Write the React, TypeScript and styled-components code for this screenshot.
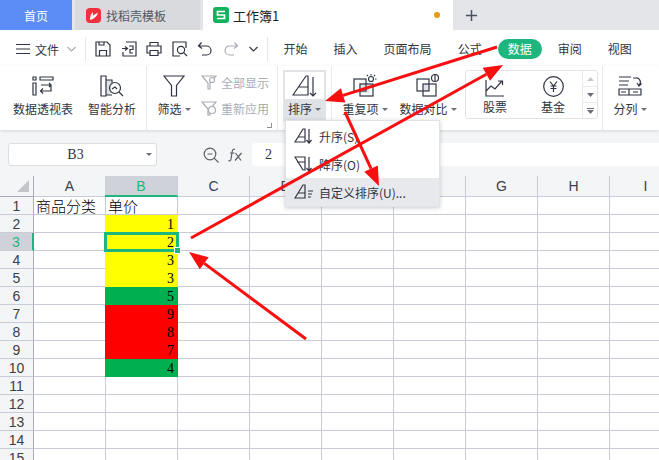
import * as React from 'react';
import styled, { createGlobalStyle } from 'styled-components';

const GlobalStyle = createGlobalStyle`
    html, body {
        margin: 0;
        padding: 0;
        background: #fff;
    }
    * {
        box-sizing: border-box;
    }
`;

const INK = '#2f3542';
const GRAY = '#a9adb5';
const LINE = '#c9cbd6';
const COLUMNS = ['A', 'B', 'C', 'D', 'E', 'F', 'G', 'H', 'I'];

const Page = styled.div`
    position: relative;
    width: 659px;
    height: 460px;
    overflow: hidden;
    background: #fff;
    color: ${INK};
    font-family: 'Noto Sans CJK SC', 'Liberation Sans', sans-serif;
    font-size: 12px;
`;

const TabBar = styled.div`
    display: flex;
    height: 30px;
    background: #e3e5e9;
`;

const HomeTab = styled.div`
    width: 72px;
    margin-right: 3px;
    background: #5c8df6;
    color: #fff;
    display: flex;
    align-items: center;
    justify-content: center;
`;

const Tab = styled.div<{ $active?: boolean }>`
    display: flex;
    align-items: center;
    gap: ${({ $active }) => ($active ? '4px' : '5px')};
    font-size: ${({ $active }) => ($active ? '13px' : '12px')};
    width: ${({ $active }) => ($active ? '250px' : '125px')};
    margin-right: ${({ $active }) => ($active ? '0' : '3px')};
    padding-left: ${({ $active }) => ($active ? '10px' : '11px')};
    background: ${({ $active }) => ($active ? '#fff' : '#d8dade')};
    color: ${({ $active }) => ($active ? '#1f2329' : '#53585f')};
`;

const UnsavedDot = styled.span`
    width: 6px;
    height: 6px;
    border-radius: 50%;
    background: #e89a10;
    margin-left: auto;
    margin-right: 13px;
`;

const AddTab = styled.div`
    width: 36px;
    display: flex;
    align-items: center;
    justify-content: center;
`;

const MenuRow = styled.div`
    display: flex;
    align-items: center;
    height: 36px;
    padding-left: 16px;
    padding-top: 2px;
    background: #fff;
`;

const FileLabel = styled.span`
    margin-left: 5px;
    margin-right: 8px;
`;

const MenuDivider = styled.span`
    width: 1px;
    height: 24px;
    background: #e4e6ea;
`;

const QuickIcons = styled.div`
    display: flex;
    align-items: center;
    gap: 9.6px;
    margin: 0 9px;
`;

const MenuTabs = styled.div`
    display: flex;
    align-items: center;
    gap: 6px;
    margin-left: 6px;
`;

const MenuItem = styled.span<{ $active?: boolean }>`
    flex: none;
    height: 20px;
    line-height: 20px;
    padding: 0 10px;
    white-space: nowrap;
    border-radius: 10px;
    background: ${({ $active }) => ($active ? '#1fb57f' : 'transparent')};
    color: ${({ $active }) => ($active ? '#fff' : INK)};
`;

const Ribbon = styled.div`
    display: flex;
    height: 64px;
    background: #fff;
    box-shadow: 0 1px 3px rgba(60, 70, 90, 0.18);
    position: relative;
`;

const RibbonGroup = styled.div<{ $width: number; $divider?: boolean }>`
    position: relative;
    display: flex;
    flex: none;
    width: ${({ $width }) => $width}px;
    border-right: ${({ $divider }) => ($divider ? '1px solid #e8eaed' : 'none')};
`;

const RibbonButton = styled.div<{ $width: number }>`
    width: ${({ $width }) => $width}px;
    flex: none;
    display: flex;
    flex-direction: column;
    align-items: center;
    padding-top: 8px;
    white-space: nowrap;
`;

const RibbonIcon = styled.div`
    height: 24px;
    margin-bottom: 3px;
    display: flex;
    align-items: center;
`;

const RibbonLabel = styled.div`
    display: flex;
    align-items: center;
    gap: 3px;
    height: 16px;
    line-height: 16px;
`;

const Caret = styled.span`
    width: 0;
    height: 0;
    border-left: 3px solid transparent;
    border-right: 3px solid transparent;
    border-top: 3px solid #6b7078;
`;

const SortButton = styled.div`
    width: 43px;
    height: 52px;
    margin: 4px 0 0 5px;
    border: 2px solid #e1e3e7;
    border-bottom: none;
    background: linear-gradient(#fff 0 27px, #dfe2e6 27px);
    display: flex;
    flex-direction: column;
    align-items: center;
    padding-top: 3px;
`;

const SortGlyph = styled.svg.attrs({ fill: 'none' })`
    display: block;
    flex: none;
    stroke-width: 1.2;
    margin-bottom: 4px;
`;

const SmallActions = styled.div`
    display: flex;
    flex-direction: column;
    gap: 8px;
    padding-top: 7px;
    color: ${GRAY};
`;

const SmallAction = styled.div`
    display: flex;
    align-items: center;
    gap: 4px;
    height: 18px;
    white-space: nowrap;
`;

const GroupCorner = styled.span`
    position: absolute;
    right: 5px;
    bottom: 2px;
    width: 5px;
    height: 5px;
    border-right: 1px solid #8f949c;
    border-bottom: 1px solid #8f949c;
`;

const StockBox = styled.div`
    display: flex;
    width: 133px;
    height: 49px;
    margin: 4px 0 0 0;
    border: 1px solid #e1e3e7;
    border-radius: 3px;
`;

const StockButton = styled.div`
    width: 58px;
    display: flex;
    flex-direction: column;
    align-items: center;
    padding-top: 5px;
    gap: 1px;
`;

const StockSpinner = styled.div`
    margin-left: auto;
    width: 15px;
    border-left: 1px solid #e8eaed;
    display: flex;
    flex-direction: column;
`;

const SpinCell = styled.div`
    flex: 1;
    display: flex;
    align-items: center;
    justify-content: center;
    & + & {
        border-top: 1px solid #e8eaed;
    }
`;

const FormulaBar = styled.div`
    height: 46px;
    background: #f4f5f7;
    display: flex;
    align-items: center;
    padding: 3px 0 0 8px;
`;

const NameBox = styled.div`
    position: relative;
    width: 149px;
    height: 23px;
    background: #fff;
    border: 1px solid #dcdee2;
    border-radius: 3px;
    font-family: 'Liberation Serif', serif;
    font-size: 14px;
    line-height: 22px;
    text-align: center;
    padding-right: 14px;
`;

const NameCaret = styled(Caret)`
    position: absolute;
    right: 4px;
    top: 9px;
`;

const FormulaTools = styled.div`
    display: flex;
    align-items: center;
    gap: 9px;
    margin: 0 9px 0 46px;
`;

const FormulaInput = styled.div`
    flex: 1;
    height: 23px;
    background: #fff;
    border-radius: 3px 0 0 3px;
    font-family: 'Liberation Serif', serif;
    font-size: 14px;
    line-height: 23px;
    padding-left: 13px;
`;

const Sheet = styled.div`
    display: grid;
    grid-template-columns: 34px repeat(9, 72px);
    grid-template-rows: 21px;
    grid-auto-rows: 18px;
`;

const Corner = styled.div`
    background: #f4f5f7;
    border-right: 1px solid #a8acb8;
    border-bottom: 1px solid #a8acb8;
    position: relative;
`;

const CornerMark = styled.span`
    position: absolute;
    right: 4px;
    bottom: 4px;
    width: 0;
    height: 0;
    border-left: 12px solid transparent;
    border-bottom: 12px solid #c3c5ca;
`;

const ColumnHead = styled.div<{ $selected?: boolean }>`
    text-align: center;
    font-size: 14px;
    line-height: 20px;
    font-family: 'Liberation Sans', sans-serif;
    background: ${({ $selected }) => ($selected ? '#cfd2d9' : '#f4f5f7')};
    color: ${({ $selected }) => ($selected ? '#1fb57f' : '#3a3f49')};
    border-right: 1px solid ${LINE};
    border-bottom: ${({ $selected }) => ($selected ? '2px solid #1fb57f' : `1px solid ${LINE}`)};
    margin-left: ${({ $selected }) => ($selected ? '-1px' : '0')};
`;

const RowHead = styled.div<{ $selected?: boolean }>`
    text-align: center;
    font-size: 14px;
    line-height: 18px;
    font-family: 'Liberation Sans', sans-serif;
    background: ${({ $selected }) => ($selected ? '#cfd2d9' : '#f4f5f7')};
    color: ${({ $selected }) => ($selected ? '#1fb57f' : '#3a3f49')};
    border-bottom: 1px solid ${LINE};
    border-right: ${({ $selected }) => ($selected ? '2px solid #1fb57f' : '1px solid #a8acb8')};
`;

const Cell = styled.div<{ $fill?: string; $number?: boolean; $selected?: boolean }>`
    position: relative;
    background: ${({ $fill }) => $fill || '#fff'};
    border-right: 1px solid ${({ $fill }) => $fill || LINE};
    border-bottom: 1px solid ${({ $fill }) => $fill || LINE};
    margin-left: ${({ $fill }) => ($fill ? '-1px' : '0')};
    color: #000;
    font-family: ${({ $number }) => ($number ? "'Liberation Serif', serif" : "'Noto Sans CJK SC', sans-serif")};
    font-size: ${({ $number }) => ($number ? '14px' : '15px')};
    line-height: ${({ $number }) => ($number ? '20px' : '18px')};
    padding: ${({ $number }) => ($number ? '0 3px 0 2px' : '0 2px')};
    text-align: ${({ $number }) => ($number ? 'right' : 'left')};
    white-space: nowrap;
    font-weight: ${({ $number }) => ($number ? 400 : 300)};
    outline: ${({ $selected }) => ($selected ? '3px solid #1fb57f' : 'none')};
    outline-offset: -2px;
    z-index: ${({ $selected }) => ($selected ? 2 : 0)};
`;

const FillHandle = styled.span`
    position: absolute;
    right: -4px;
    bottom: -4px;
    width: 5px;
    height: 5px;
    background: #1fb57f;
    border: 1px solid #fff;
    box-sizing: content-box;
`;

const SortMenu = styled.div`
    position: absolute;
    left: 285px;
    top: 120px;
    width: 155px;
    height: 87px;
    padding: 1px 0 0 0;
    background: #fff;
    border: 1px solid #e1e3e7;
    box-shadow: 0 1px 4px rgba(40, 50, 70, 0.25);
    z-index: 5;
`;

const SortOption = styled.div<{ $hover?: boolean }>`
    display: flex;
    align-items: center;
    gap: 5px;
    height: 28px;
    padding-left: 8px;
    background: ${({ $hover }) => ($hover ? '#e7e9ed' : 'transparent')};
`;

const ArrowLayer = styled.svg`
    position: absolute;
    left: 0;
    top: 0;
    z-index: 10;
    pointer-events: none;
`;

const Stroke = styled.svg.attrs({ fill: 'none' })`
    display: block;
    flex: none;
    stroke-width: 1.2;
`;

const FileChevron = styled(Stroke)`
    margin-right: 9px;
`;

const StockChart = styled(Stroke)`
    margin-top: 3px;
`;

const AscIcon = () => (
    <Stroke width="20" height="18" viewBox="0 0 20 18" stroke={INK}>
        <path d="M1 15 L9 2 H11 V15 Z M4 10 H11" />
        <path d="M15 2 V16 M12.5 13 L15 16 L17.5 13" />
    </Stroke>
);

const SortRows: { fill?: string; value?: string }[] = [
    { value: undefined },
    { fill: '#ffff00', value: '1' },
    { fill: '#ffff00', value: '2' },
    { fill: '#ffff00', value: '3' },
    { fill: '#ffff00', value: '3' },
    { fill: '#00b050', value: '5' },
    { fill: '#ff0000', value: '9' },
    { fill: '#ff0000', value: '8' },
    { fill: '#ff0000', value: '7' },
    { fill: '#00b050', value: '4' },
    {},
    {},
    {},
    {},
    {},
];

const RedArrow = ({ x1, y1, x2, y2 }: { x1: number; y1: number; x2: number; y2: number }) => {
    const angle = Math.atan2(y2 - y1, x2 - x1);
    const len = 19;
    const wing = 7.5;
    const bx = x2 - Math.cos(angle) * len;
    const by = y2 - Math.sin(angle) * len;
    const px = -Math.sin(angle) * wing;
    const py = Math.cos(angle) * wing;
    return (
        <g>
            <line x1={x1} y1={y1} x2={bx} y2={by} stroke="#f90f0f" strokeWidth="3" />
            <polygon points={`${x2},${y2} ${bx + px},${by + py} ${bx - px},${by - py}`} fill="#f90f0f" />
        </g>
    );
};

const App = () => {
    return (
        <Page>
            <GlobalStyle />
            <TabBar>
                <HomeTab>首页</HomeTab>
                <Tab>
                    <svg width="15" height="15" viewBox="0 0 15 15">
                        <rect width="15" height="15" rx="4" fill="#f0303c" />
                        <path d="M4 12 C4 8 5 6 7 4 C7 6 7 7 6.8 8 C8 6.5 10 5.5 12 5 C11 8 8 11 4 12 Z" fill="#fff" />
                    </svg>
                    找稻壳模板
                </Tab>
                <Tab $active>
                    <svg width="16" height="16" viewBox="0 0 16 16">
                        <rect width="16" height="16" rx="3" fill="#12b35d" />
                        <path d="M12 4.5 H4.5 V8 H11.5 V11.5 H4" fill="none" stroke="#fff" strokeWidth="1.7" />
                    </svg>
                    工作簿1
                    <UnsavedDot />
                </Tab>
                <AddTab>
                    <svg width="13" height="13" viewBox="0 0 14 14" stroke="#4a5160" strokeWidth="1.6">
                        <path d="M7 1 V13 M1 7 H13" />
                    </svg>
                </AddTab>
            </TabBar>

            <MenuRow>
                <Stroke width="14" height="12" viewBox="0 0 14 12" stroke={INK}>
                    <path d="M0 1.5 H14 M0 6 H14 M0 10.5 H14" />
                </Stroke>
                <FileLabel>文件</FileLabel>
                <FileChevron width="9" height="6" viewBox="0 0 9 6" stroke={GRAY}>
                    <path d="M0.5 1 L4.5 5 L8.5 1" />
                </FileChevron>
                <MenuDivider />
                <QuickIcons>
                    <Stroke width="16" height="16" viewBox="0 0 16 16" stroke={INK}>
                        <path d="M1 1 H12 L15 4 V15 H1 Z M4.5 15 V9.5 H11.5 V15 M4 1 V4 H9 V1" />
                    </Stroke>
                    <Stroke width="16" height="16" viewBox="0 0 16 16" stroke={INK}>
                        <path d="M5 1 H15 V15 H2 V11 M1 7.5 H6 M4 5.5 L6.5 7.5 L4 9.5 M8 5 H12 V8.5 H9 V12 H12" />
                    </Stroke>
                    <Stroke width="16" height="16" viewBox="0 0 16 16" stroke={INK}>
                        <path d="M4 5 V1.5 H12 V5 M4 12 H1 V5 H15 V12 H12 M4 9.5 H12 V14.5 H4 Z" />
                    </Stroke>
                    <Stroke width="16" height="16" viewBox="0 0 16 16" stroke={INK}>
                        <path d="M14 7 V1 H1 V15 H8" />
                        <circle cx="9" cy="9" r="3.6" />
                        <path d="M11.6 11.6 L15 15" />
                    </Stroke>
                    <Stroke width="16" height="16" viewBox="0 0 16 16" stroke={INK}>
                        <path d="M4.5 1.5 L1.5 5 L5 7.5 M2 5 H9.5 A4.5 4.5 0 0 1 9.5 14 H5" />
                    </Stroke>
                    <Stroke width="16" height="16" viewBox="0 0 16 16" stroke={GRAY}>
                        <path d="M11.5 1.5 L14.5 5 L11 7.5 M14 5 H6.5 A4.5 4.5 0 0 0 6.5 14 H11" />
                    </Stroke>
                    <Stroke width="9" height="6" viewBox="0 0 9 6" stroke={INK}>
                        <path d="M0.5 1 L4.5 5 L8.5 1" />
                    </Stroke>
                </QuickIcons>
                <MenuDivider />
                <MenuTabs>
                    <MenuItem>开始</MenuItem>
                    <MenuItem>插入</MenuItem>
                    <MenuItem>页面布局</MenuItem>
                    <MenuItem>公式</MenuItem>
                    <MenuItem $active>数据</MenuItem>
                    <MenuItem>审阅</MenuItem>
                    <MenuItem>视图</MenuItem>
                </MenuTabs>
            </MenuRow>

            <Ribbon>
                <RibbonGroup $width={147} $divider>
                    <RibbonButton $width={86}>
                        <RibbonIcon>
                            <Stroke width="22" height="20" viewBox="0 0 22 20" stroke={INK}>
                                <path d="M1 1 H4 V4 H1 Z M1 7 H4 V19 H1 Z M8 1 H21 V4 H8 Z M9 9 H19 V15 H9 M11 12.5 L8.5 15 L11 17.5 M17 7 L19 9 L17 11" />
                            </Stroke>
                        </RibbonIcon>
                        <RibbonLabel>数据透视表</RibbonLabel>
                    </RibbonButton>
                    <RibbonButton $width={52}>
                        <RibbonIcon>
                            <Stroke width="24" height="23" viewBox="0 0 24 23" stroke={INK}>
                                <path d="M6 5 H11 V20 H6 Z" fill="#dfe2e6" stroke="none" />
                                <path d="M1 1 H6 V21 H1 Z M6 5 H12 V8 M6 20 H12" />
                                <circle cx="15" cy="13" r="5.5" />
                                <path d="M19 17 L23 21 M12 14 L15 12 L17 14" />
                            </Stroke>
                        </RibbonIcon>
                        <RibbonLabel>智能分析</RibbonLabel>
                    </RibbonButton>
                </RibbonGroup>
                <RibbonGroup $width={131} $divider>
                    <RibbonButton $width={54}>
                        <RibbonIcon>
                            <Stroke width="22" height="22" viewBox="0 0 22 22" stroke={INK}>
                                <path d="M1 1 H21 L13.5 10.5 V21 H8.5 V10.5 Z" />
                            </Stroke>
                        </RibbonIcon>
                        <RibbonLabel>
                            筛选<Caret />
                        </RibbonLabel>
                    </RibbonButton>
                    <SmallActions>
                        <SmallAction>
                            <Stroke width="16" height="15" viewBox="0 0 16 15" stroke={GRAY}>
                                <path d="M1 1 H15 L9 8 V14 H7 V8 Z" />
                                <circle cx="11" cy="5" r="2.5" fill="#fff" />
                            </Stroke>
                            全部显示
                        </SmallAction>
                        <SmallAction>
                            <Stroke width="16" height="15" viewBox="0 0 16 15" stroke={GRAY}>
                                <path d="M1 1 H15 L9 8 V14 H7 V8 Z" />
                                <circle cx="11" cy="9" r="3.5" fill="#fff" />
                            </Stroke>
                            重新应用
                        </SmallAction>
                    </SmallActions>
                    <GroupCorner />
                </RibbonGroup>
                <RibbonGroup $width={54} $divider>
                    <SortButton>
                        <SortGlyph width="25" height="22" viewBox="0 0 25 22" stroke={INK}>
                            <path d="M1 20 L14 1 H16 V20 Z M7 12 H16" />
                            <path d="M21 2 V21 M18 18 L21 21 L24 18" />
                        </SortGlyph>
                        <RibbonLabel>
                            排序<Caret />
                        </RibbonLabel>
                    </SortButton>
                </RibbonGroup>
                <RibbonGroup $width={133}>
                    <RibbonButton $width={66}>
                        <RibbonIcon>
                            <Stroke width="24" height="24" viewBox="0 0 24 24" stroke={INK}>
                                <rect x="6" y="9" width="10" height="10" fill="#dfe2e6" stroke="none" />
                                <rect x="1" y="5" width="12" height="12" />
                                <rect x="7" y="10" width="13" height="12" />
                                <circle cx="18" cy="5" r="2.5" />
                                <path d="M18 0 V1.5 M23.5 5 H22 M14 1 L15 2 M22 1 L21 2" />
                            </Stroke>
                        </RibbonIcon>
                        <RibbonLabel>
                            重复项<Caret />
                        </RibbonLabel>
                    </RibbonButton>
                    <RibbonButton $width={60}>
                        <RibbonIcon>
                            <Stroke width="24" height="24" viewBox="0 0 24 24" stroke={INK}>
                                <rect x="7" y="10" width="6" height="7" fill="#dfe2e6" stroke="none" />
                                <rect x="1" y="5" width="12" height="12" />
                                <rect x="7" y="10" width="13" height="12" />
                                <circle cx="19" cy="4" r="3.5" />
                                <path d="M19 0.5 V7.5" />
                            </Stroke>
                        </RibbonIcon>
                        <RibbonLabel>
                            数据对比<Caret />
                        </RibbonLabel>
                    </RibbonButton>
                </RibbonGroup>
                <RibbonGroup $width={138} $divider>
                    <StockBox>
                        <StockButton>
                            <StockChart width="20" height="18" viewBox="0 0 20 18" stroke={INK}>
                                <path d="M1 1 V17 H19 M1 12 L6 7 L10 10 L17 2 M13 2 H17.5 V6" />
                            </StockChart>
                            股票
                        </StockButton>
                        <StockButton>
                            <Stroke width="21" height="21" viewBox="0 0 21 21" stroke={INK}>
                                <circle cx="10.5" cy="10.5" r="9.8" />
                                <path d="M7 5.5 L10.5 10 L14 5.5 M10.5 10 V16 M7.5 10 H13.5 M7.5 12.5 H13.5" />
                            </Stroke>
                            基金
                        </StockButton>
                        <StockSpinner>
                            <SpinCell>
                                <svg width="7" height="4" viewBox="0 0 7 4">
                                    <path d="M0 4 L3.5 0 L7 4 Z" fill="#c5c8ce" />
                                </svg>
                            </SpinCell>
                            <SpinCell>
                                <svg width="7" height="4" viewBox="0 0 7 4">
                                    <path d="M0 0 L3.5 4 L7 0 Z" fill="#6b7078" />
                                </svg>
                            </SpinCell>
                            <SpinCell>
                                <svg width="7" height="6" viewBox="0 0 7 6">
                                    <path d="M0 0 H7 V1 H0 Z M0 2 L3.5 6 L7 2 Z" fill="#6b7078" />
                                </svg>
                            </SpinCell>
                        </StockSpinner>
                    </StockBox>
                </RibbonGroup>
                <RibbonButton $width={54}>
                    <RibbonIcon>
                        <Stroke width="24" height="20" viewBox="0 0 24 20" stroke={INK}>
                            <path d="M1 1 H13 M1 5 H11 M1 9 H10 M1 13 H23 V19 H1 Z M11 13 V19 M3 16 H8 M15 16 H20 M15 2 H18 A4 4 0 0 1 21 9 M19 7 L21 10 L23.5 7.5" />
                        </Stroke>
                    </RibbonIcon>
                    <RibbonLabel>
                        分列<Caret />
                    </RibbonLabel>
                </RibbonButton>
            </Ribbon>

            <FormulaBar>
                <NameBox>
                    B3
                    <NameCaret />
                </NameBox>
                <FormulaTools>
                    <Stroke width="16" height="16" viewBox="0 0 16 16" stroke="#5a5f69">
                        <circle cx="7" cy="7" r="5.8" />
                        <path d="M4.5 7 H9.5 M11.2 11.2 L15.5 15.5" />
                    </Stroke>
                    <Stroke width="15" height="14" viewBox="0 0 15 14" stroke="#5a5f69">
                        <path d="M7 1.5 C5.5 0.5 4.5 1.5 4.2 3.5 L3 11 C2.7 13 1.6 13.4 0.5 12.6 M2 5 H6.5 M7.5 5 L13 12.5 M13.5 5 L7 12.5" />
                    </Stroke>
                </FormulaTools>
                <FormulaInput>2</FormulaInput>
            </FormulaBar>

            <Sheet>
                <Corner>
                    <CornerMark />
                </Corner>
                {COLUMNS.map((col) => (
                    <ColumnHead key={col} $selected={col === 'B'}>
                        {col}
                    </ColumnHead>
                ))}
                {SortRows.map((row, i) => (
                    <React.Fragment key={i}>
                        <RowHead $selected={i === 2}>{i + 1}</RowHead>
                        {COLUMNS.map((col) => {
                            if (col === 'A') {
                                return <Cell key={col}>{i === 0 ? '商品分类' : ''}</Cell>;
                            }
                            if (col === 'B') {
                                if (i === 0) {
                                    return <Cell key={col}>单价</Cell>;
                                }
                                return (
                                    <Cell key={col} $fill={row.fill} $number $selected={i === 2}>
                                        {row.value}
                                        {i === 2 && <FillHandle />}
                                    </Cell>
                                );
                            }
                            return <Cell key={col} />;
                        })}
                    </React.Fragment>
                ))}
            </Sheet>

            <SortMenu>
                <SortOption>
                    <AscIcon />
                    升序(S)
                </SortOption>
                <SortOption>
                    <Stroke width="20" height="18" viewBox="0 0 20 18" stroke={INK}>
                        <path d="M1 2 H11 V15 H9 Z M3 7 H11" />
                        <path d="M15 2 V16 M12.5 13 L15 16 L17.5 13" />
                    </Stroke>
                    降序(O)
                </SortOption>
                <SortOption $hover>
                    <Stroke width="20" height="18" viewBox="0 0 20 18" stroke={INK}>
                        <path d="M1 15 L9 2 H11 V15 Z M4 10 H11 M14 8 H19 M14 11 H18 M14 14 H17" />
                    </Stroke>
                    自定义排序(U)...
                </SortOption>
            </SortMenu>

            <ArrowLayer width="659" height="460" viewBox="0 0 659 460">
                <RedArrow x1={497} y1={47} x2={325} y2={101} />
                <RedArrow x1={191} y1={238} x2={503} y2={65} />
                <RedArrow x1={345} y1={112} x2={379} y2={186} />
                <RedArrow x1={306} y1={339} x2={189} y2={252} />
            </ArrowLayer>
        </Page>
    );
};

export default App;
